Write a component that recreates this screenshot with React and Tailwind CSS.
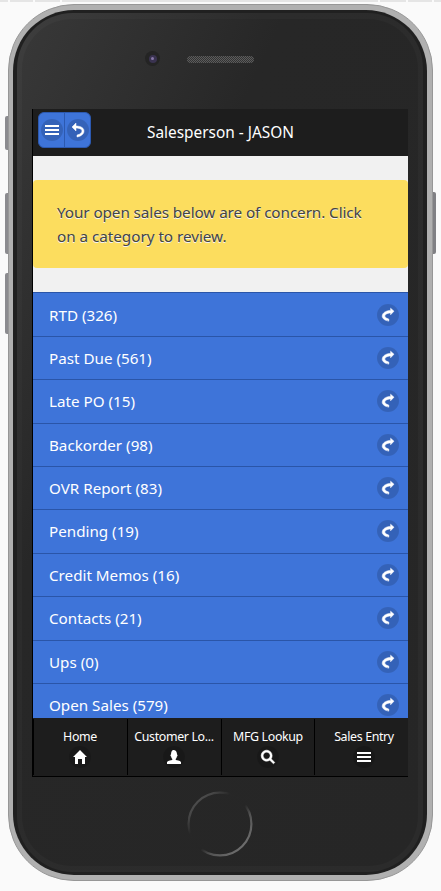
const ROWS = [
  ["RTD (326)", "h-[44px] pt-[11px]"],
  ["Past Due (561)", "h-[43px] pt-[10px]"],
  ["Late PO (15)", "h-[44px] pt-[10px]"],
  ["Backorder (98)", "h-[43px] pt-[10px]"],
  ["OVR Report (83)", "h-[43px] pt-[10px]"],
  ["Pending (19)", "h-[44px] pt-[10px]"],
  ["Credit Memos (16)", "h-[43px] pt-[10px]"],
  ["Contacts (21)", "h-[44px] pt-[10px]"],
  ["Ups (0)", "h-[43px] pt-[10px]"],
  ["Open Sales (579)", "h-[44px] pt-[10px]"],
];

const PATHS = {
  bars: "M0,2h14v2H0z M0,6h14v2H0z M0,10h14v2H0z",
  back: "M5,3V0L1,4l4,4V5c0,0,6,0,6,3s-5,4-5,4v2c0,0,7-1,7-6C13,4,8,3,5,3z",
  forward: "M13,3.2L9.6,0.2v2.2C6.2,2.5,1.2,4.1,1.2,8.3c0,3.8,6.6,4.9,6.6,4.9v-2.2c0,0-4-0.9-4-3c0-2.1,3.8-3,5.8-3.1V6.8z",
  home: "M7,0L0,7h2v7h3V9h4v5h3V7h2z",
  user: "M8.851,10.101c-0.18-0.399-0.2-0.763-0.153-1.104C9.383,8.49,9.738,7.621,9.891,6.465C10.493,6.355,10.5,5.967,10.5,5.5c0-0.437,0.008-0.804-0.502-0.94C9.999,4.539,10,4.521,10,4.5c0-2.103-1-4-2-4C8,0.5,7.5,0,6.5,0C5,0,4,1.877,4,4.5c0,0.021,0.001,0.039,0.002,0.06C3.492,4.696,3.5,5.063,3.5,5.5c0,0.467,0.007,0.855,0.609,0.965C4.262,7.621,4.617,8.49,5.303,8.997c0.047,0.341,0.026,0.704-0.153,1.104C1.503,10.503,0,12,0,12v2h14v-2C14,12,12.497,10.503,8.851,10.101z",
  search: "M10.171,8.766c0.617-0.888,0.979-1.964,0.979-3.126c0-3.037-2.463-5.5-5.5-5.5s-5.5,2.463-5.5,5.5s2.463,5.5,5.5,5.5c1.152,0,2.223-0.355,3.104-0.962l3.684,3.683l1.414-1.414L10.171,8.766z M5.649,9.14c-1.933,0-3.5-1.567-3.5-3.5c0-1.933,1.567-3.5,3.5-3.5c1.933,0,3.5,1.567,3.5,3.5C9.149,7.572,7.582,9.14,5.649,9.14z",
};

const BOLD = ["back", "search", "forward"];

function Icon({ name }) {
  return (
    <span className="flex size-[22px] shrink-0 items-center justify-center rounded-full bg-black/15">
      <svg
        width="14"
        height="14"
        viewBox="0 0 14 14"
        fill="#fff"
        stroke="#fff"
        strokeWidth={BOLD.includes(name) ? 0.5 : 0}
        overflow="visible"
      >
        <path d={PATHS[name]} />
      </svg>
    </span>
  );
}

const NAV = [
  ["Home", "home", "w-[94px] pr-[1px]"],
  ["Customer Lo...", "user", "w-[94px] pr-[1px]"],
  ["MFG Lookup", "search", "w-[93px]"],
  ["Sales Entry", "bars", "w-[94px] pl-[5px]"],
];

function Screen() {
  return (
    <div className="ml-[10px] flex h-[668px] w-[376px] flex-col overflow-hidden border-b border-l border-black bg-[#f1f1f1]">
      <header className="flex h-[47px] shrink-0 items-start bg-[#1d1d1d] pl-[5px] pt-[3px]">
        <div className="flex h-[36px] w-[53px] overflow-hidden rounded-[6px] border border-[#2c59b0] bg-[#3e74d9]">
          <button className="flex w-[26px] items-center justify-center border-r border-[#2c59b0]">
            <Icon name="bars" />
          </button>
          <button className="flex w-[25px] items-center justify-center">
            <Icon name="back" />
          </button>
        </div>
        <h1 className="ml-[56px] mt-[9px] whitespace-nowrap text-[15.4px] leading-[24px] text-white">
          Salesperson - JASON
        </h1>
      </header>
      <div className="mt-[24px] h-[88px] shrink-0 rounded-[4px] bg-[#fcdd5e] pl-[24px] pt-[20px] text-[15.3px] leading-[24px] text-[#444] [text-shadow:0_1px_0_#f3f3f3]">
        <p className="whitespace-nowrap tracking-[-0.1px]">Your open sales below are of concern. Click</p>
        <p className="whitespace-nowrap tracking-[-0.05px]">on a category to review.</p>
      </div>
      <ul className="mt-[24px] h-[426px] shrink-0 overflow-hidden bg-[#3e74d9]">
        {ROWS.map(([label, size]) => (
          <li key={label} className={`flex items-start justify-between border-t border-[#2a55a8] pl-[16px] pr-[9px] ${size}`}>
            <span className="whitespace-nowrap text-[15.2px] leading-[22px] text-white">{label}</span>
            <Icon name="forward" />
          </li>
        ))}
      </ul>
      <nav className="flex h-[58px] shrink-0 bg-[#1d1d1d] pb-px pt-px">
        {NAV.map(([label, icon, box]) => (
          <div key={label} className={`flex flex-col items-center gap-px border-l border-black pt-[9px] ${box}`}>
            <span className="whitespace-nowrap text-[12.4px] leading-[17px] tracking-[-0.35px] text-white">{label}</span>
            <Icon name={icon} />
          </div>
        ))}
      </nav>
    </div>
  );
}

export default function App() {
  return (
    <main className="h-[891px] w-[441px] overflow-hidden bg-[#fafafa] font-['Noto_Sans',sans-serif]">
      <div className="flex h-[2px] gap-[2px] bg-[#fafafa]">
        <i className="w-[8px] bg-[#e5e5e5]" />
        <i className="w-[23px] bg-[#e5e5e5]" />
        <i className="w-[25px] bg-[#e5e5e5]" />
        <i className="w-[316px] bg-[#e5e5e5]" />
        <i className="w-[26px] bg-[#e5e5e5]" />
        <i className="w-[24px] bg-[#e5e5e5]" />
        <i className="flex-1 bg-[#e5e5e5]" />
      </div>
      <div className="relative ml-[7.5px] mt-[2px] h-[877px] w-[425px] rounded-[66px] border border-[#979797] bg-[#b0b0b0] pl-[4.5px] pt-[5px]">
        <i className="absolute left-[-4px] top-[111px] h-[34px] w-[3px] rounded-l-[2px] bg-[#8b8b8f]" />
        <i className="absolute left-[-4px] top-[188px] h-[61px] w-[3px] rounded-l-[2px] bg-[#8b8b8f]" />
        <i className="absolute left-[-4px] top-[268px] h-[61px] w-[3px] rounded-l-[2px] bg-[#8b8b8f]" />
        <i className="absolute right-[-4px] top-[187px] h-[62px] w-[3px] rounded-r-[2px] bg-[#808084]" />
        <div className="h-[865px] w-[414px] rounded-[61px] bg-[#202020] pl-[4px] pt-[3px]">
          <div className="h-[859px] w-[406px] rounded-[56px] bg-linear-to-br from-[#3e3e3e] via-[#2c2c2c] via-30% to-[#2b2b2b] pl-[5px] pt-[6px]">
            <div className="h-[847px] w-[396px] rounded-[50px] bg-linear-[115deg,#383838_0%,#272727_33%,#262626_100%]">
              <div className="flex h-[90px] items-start pl-[123px] pt-[32px]">
                <span className="flex size-[15px] items-center justify-center rounded-full bg-[#242424]">
                  <i className="flex size-[8px] items-center justify-center rounded-full bg-[#3a3350]">
                    <i className="size-[3px] rounded-full bg-[#8878a8]" />
                  </i>
                </span>
                <span className="ml-[27px] mt-[5px] h-[7px] w-[67px] rounded-full bg-[#444] bg-[repeating-conic-gradient(#333_0_25%,#5c5c5c_0_50%)] bg-size-[2px_2px]" />
              </div>
              <Screen />
              <div className="ml-[165px] mt-[14px] size-[66px]">
                <svg width="66" height="66" viewBox="0 0 66 66" fill="none" strokeWidth="2.2">
                  <defs>
                    <linearGradient id="ring" x1="0.1" y1="0.1" x2="0.9" y2="0.9">
                      <stop offset="0" stopColor="#505050" />
                      <stop offset="0.12" stopColor="#464646" />
                      <stop offset="0.3" stopColor="#272727" />
                      <stop offset="0.56" stopColor="#262626" />
                      <stop offset="0.7" stopColor="#525252" />
                      <stop offset="1" stopColor="#727272" />
                    </linearGradient>
                  </defs>
                  <circle cx="33" cy="33" r="31.4" stroke="url(#ring)" />
                </svg>
              </div>
            </div>
          </div>
        </div>
      </div>
    </main>
  );
}
